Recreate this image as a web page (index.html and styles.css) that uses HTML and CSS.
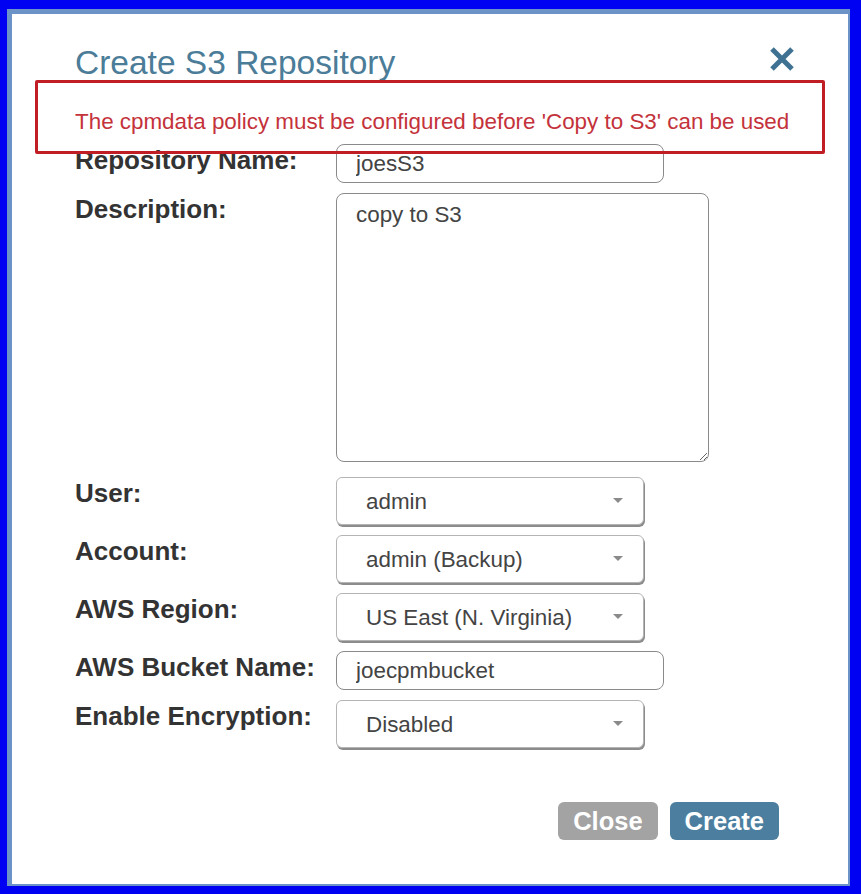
FILE: index.html
```html
<!DOCTYPE html>
<html lang="en">
  <head>
    <meta charset="UTF-8" />
    <meta name="viewport" content="width=device-width, initial-scale=1.0" />
    <title>Create S3 Repository</title>
    <link rel="stylesheet" href="styles.css">
  </head>
  <body>
    <div class="modal">
      <div class="modal-header">
        <h1>Create S3 Repository</h1>
        <button class="close-x" aria-label="Close">
          <svg width="26" height="24" viewBox="0 0 26 24">
            <path d="M3 2 L23 22 M23 2 L3 22" stroke="#3f7292" stroke-width="5" stroke-linecap="butt" />
          </svg>
        </button>
      </div>
      <div class="error">The cpmdata policy must be configured before 'Copy to S3' can be used</div>
      <div class="error-outline"></div>

      <form class="form">
        <label for="repo-name">Repository Name:</label>
        <input type="text" id="repo-name" class="text-input" value="joesS3" />

        <label for="description">Description:</label>
        <textarea id="description" class="text-area">copy to S3</textarea>

        <label for="user">User:</label>
        <div class="select-wrap">
          <select id="user">
            <option>admin</option>
          </select>
        </div>

        <label for="account">Account:</label>
        <div class="select-wrap">
          <select id="account">
            <option>admin (Backup)</option>
          </select>
        </div>

        <label for="region">AWS Region:</label>
        <div class="select-wrap">
          <select id="region">
            <option>US East (N. Virginia)</option>
          </select>
        </div>

        <label for="bucket">AWS Bucket Name:</label>
        <input type="text" id="bucket" class="text-input" value="joecpmbucket" />

        <label for="encryption">Enable Encryption:</label>
        <div class="select-wrap">
          <select id="encryption">
            <option>Disabled</option>
          </select>
        </div>
      </form>

      <div class="actions">
        <button class="btn btn-close">Close</button>
        <button class="btn btn-create">Create</button>
      </div>
    </div>
  </body>
</html>
```

FILE: styles.css
```css
html,
body {
  height: 100%;
}
body {
  margin: 0;
  padding: 9px 11px 8px 7px;
  box-sizing: border-box;
  background-color: #0000f2;
  font-family: "Liberation Sans", Arial, sans-serif;
}
.modal {
  position: relative;
  height: 100%;
  box-sizing: border-box;
  background-color: #fff;
  border-style: solid;
  border-color: #6c93c8;
  border-width: 5px 2px 2px 5px;
  padding: 0 53px 0 63px;
}
.modal-header {
  display: flex;
  justify-content: space-between;
  align-items: flex-start;
  padding-top: 30px;
  height: 40px;
}
h1 {
  margin: 0;
  font-size: 33.5px;
  font-weight: normal;
  color: #4b7c98;
  white-space: nowrap;
}
.close-x {
  background: none;
  border: none;
  padding: 0;
  margin-top: 3px;
  cursor: pointer;
}
.error {
  margin-top: 25px;
  font-size: 22.4px;
  color: #c4323b;
  white-space: nowrap;
}
.error-outline {
  position: absolute;
  left: 23px;
  top: 66px;
  width: 790px;
  height: 74px;
  box-sizing: border-box;
  border: 3px solid #c01d25;
  border-radius: 2px;
  pointer-events: none;
}
.form {
  display: grid;
  grid-template-columns: 261px 1fr;
  row-gap: 10px;
  margin-top: 9px;
  align-items: start;
}
.form label {
  font-weight: bold;
  font-size: 26px;
  line-height: 1.1;
  color: #333;
  padding-top: 2px;
  white-space: nowrap;
}
.text-input,
.text-area,
select {
  font-family: inherit;
  font-size: 22.4px;
  color: #444;
  box-sizing: border-box;
}
.text-input {
  width: 328px;
  height: 39px;
  border: 1px solid #8a8a8a;
  border-radius: 8px;
  padding: 0 19px;
}
.text-area {
  width: 373px;
  height: 269px;
  border: 1px solid #8a8a8a;
  border-radius: 8px;
  padding: 8px 19px;
  margin-bottom: 5px;
}
.select-wrap {
  position: relative;
  width: 308px;
}
.select-wrap::after {
  content: "";
  position: absolute;
  right: 21px;
  top: 21px;
  border-left: 5px solid transparent;
  border-right: 5px solid transparent;
  border-top: 5px solid #8a8a8a;
  pointer-events: none;
}
select {
  appearance: none;
  width: 100%;
  height: 48px;
  padding: 0 29px;
  background-color: #fff;
  border: 1px solid #b4b4b4;
  border-radius: 6px;
  box-shadow: 1px 2px 0 #8c8c8c;
}
.actions {
  display: flex;
  justify-content: flex-end;
  gap: 12px;
  margin-top: 54px;
  padding-right: 16px;
}
.btn {
  font-family: inherit;
  font-size: 25.5px;
  font-weight: bold;
  color: #fff;
  border: none;
  border-radius: 6px;
  height: 38px;
  padding: 0 15px;
  cursor: pointer;
}
.btn-close {
  background-color: #a3a3a3;
}
.btn-create {
  background-color: #4c7f9f;
}
```
